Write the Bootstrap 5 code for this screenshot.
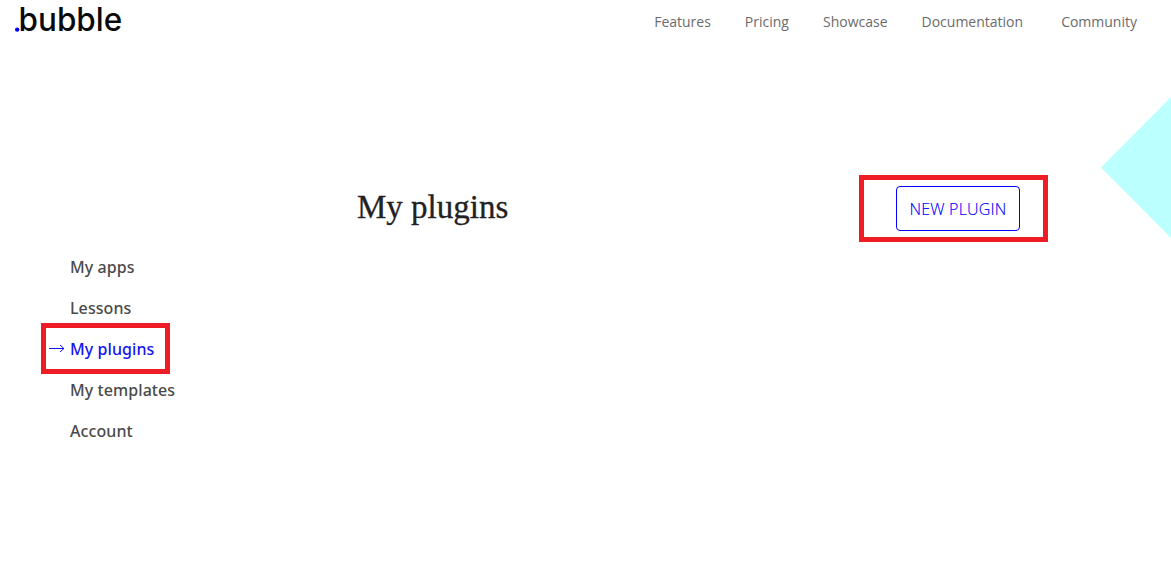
<!DOCTYPE html>
<html lang="en">

<head>
    <meta charset="UTF-8">
    <meta name="viewport" content="width=device-width, initial-scale=1">
    <title>My plugins</title>
    <link href="https://cdn.jsdelivr.net/npm/bootstrap@5.3.0/dist/css/bootstrap.min.css" rel="stylesheet">
    <style>
        body {
            font-family: "Open Sans", "Noto Sans", sans-serif;
            min-height: 577px;
            overflow: hidden;
        }

        .site-header {
            height: 44px;
            padding: 0 34px 0 15px;
        }

        .site-links {
            gap: 34px;
            padding-bottom: 2px;
            font-size: 14px;
        }

        .site-links a {
            color: #6b6b6b;
        }

        .site-links .last-link {
            margin-left: 4px;
        }

        .page-top {
            margin-top: 131px;
            height: 67px;
            padding-left: 357px;
            padding-right: 123px;
        }

        .page-title {
            padding-bottom: 2px;
            font-family: "Liberation Serif", serif;
            font-size: 33px;
            line-height: 1;
            color: #222;
            -webkit-text-stroke: .3px #222;
        }

        .marked {
            border: 5px solid #ee1c25;
        }

        .marked-button {
            width: 189px;
            height: 67px;
            padding-right: 23px;
        }

        .btn-new {
            --bs-btn-color: #0000ff;
            width: 124px;
            height: 45px;
            padding: 0;
            border-radius: 4px;
            border-color: #0000ff;
            font-size: 16px;
            font-weight: 300;
            letter-spacing: .2px;
            -webkit-text-stroke: .15px #0000ff;
        }

        .side-menu {
            margin-top: 4px;
            margin-left: 41px;
            width: 150px;
            font-family: "Noto Sans", sans-serif;
            font-size: 16px;
            font-weight: 500;
            letter-spacing: .08px;
        }

        .side-menu a {
            height: 41px;
            padding-left: 29px;
            color: #4a4a4a;
        }

        .side-menu a.current {
            width: 129px;
            height: 51px;
            margin: -5px 0;
            padding-left: 3px;
            color: #1414f0;
        }

        .arrow {
            width: 21px;
        }

        .corner-shape {
            top: 97px;
            right: 0;
        }
    </style>
    <script src="https://cdn.jsdelivr.net/npm/bootstrap@5.3.0/dist/js/bootstrap.bundle.min.js"></script>
</head>

<body class="position-relative bg-white">
    <header class="site-header d-flex justify-content-between align-items-center">
        <a href="#" class="d-block" aria-label="bubble">
            <svg class="d-block" width="110" height="44" viewBox="0 0 110 44">
                <circle cx="2.2" cy="29.6" r="2.2" fill="#00f" />
                <text x="3.6" y="31.3" textLength="103.6" lengthAdjust="spacingAndGlyphs" font-family="Inter, sans-serif"
                    font-size="32" font-weight="500" fill="#0a0a0a">bubble</text>
            </svg>
        </a>
        <nav class="site-links d-flex">
            <a href="#" class="text-decoration-none">Features</a>
            <a href="#" class="text-decoration-none">Pricing</a>
            <a href="#" class="text-decoration-none">Showcase</a>
            <a href="#" class="text-decoration-none">Documentation</a>
            <a href="#" class="text-decoration-none last-link">Community</a>
        </nav>
    </header>

    <main>
        <div class="page-top d-flex justify-content-between align-items-center">
            <h1 class="page-title mb-0">My plugins</h1>
            <div class="marked marked-button d-flex justify-content-end align-items-center">
                <button class="btn btn-new">NEW PLUGIN</button>
            </div>
        </div>

        <nav class="side-menu d-flex flex-column">
            <a href="#" class="d-flex align-items-center text-decoration-none">My apps</a>
            <a href="#" class="d-flex align-items-center text-decoration-none">Lessons</a>
            <a href="#" class="current marked d-flex align-items-center text-decoration-none">
                <svg class="arrow" width="21" height="12" viewBox="0 0 21 12" fill="none" stroke="currentColor">
                    <path d="M0 5.5H15M11 2L15 5.5L11 9" />
                </svg>
                My plugins
            </a>
            <a href="#" class="d-flex align-items-center text-decoration-none">My templates</a>
            <a href="#" class="d-flex align-items-center text-decoration-none">Account</a>
        </nav>
    </main>

    <svg class="corner-shape position-absolute" width="70" height="141" viewBox="0 0 70 141">
        <path d="M70 0V141L0 70.5Z" fill="#bff" />
    </svg>
</body>

</html>
